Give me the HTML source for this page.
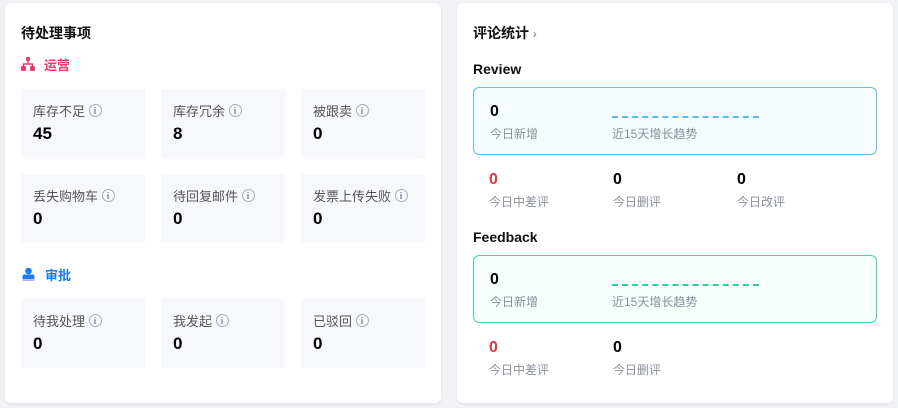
<!DOCTYPE html>
<html><head><meta charset="utf-8"><style>
*{margin:0;padding:0;box-sizing:border-box}
body{width:898px;height:408px;background:#f0f2f5;font-family:"Liberation Sans","Noto Sans CJK SC",sans-serif;position:relative;overflow:hidden}
.card{position:absolute;top:3px;width:436px;height:400px;background:#fff;border-radius:6px;box-shadow:0 1px 3px rgba(0,0,0,.08)}
.abs{position:absolute;white-space:nowrap}
.title{font-size:14px;font-weight:bold;color:#111}
.tile{position:absolute;width:124px;height:69px;background:#f7f8fb}
.tile .l{position:absolute;left:12px;top:12px;font-size:13px;color:#555;display:flex;align-items:center}
.tile .n{position:absolute;left:12px;top:35px;font-size:17px;font-weight:bold;color:#000}
.i{display:inline-block;width:13px;height:13px;border:1.3px solid #a5abba;border-radius:50%;margin-left:4px;position:relative}
.i:before{content:"";position:absolute;left:4.2px;top:1.6px;width:1.6px;height:1.6px;background:#a5abba}
.i:after{content:"";position:absolute;left:4.2px;top:4.2px;width:1.6px;height:4.5px;background:#a5abba}
.box{position:absolute;left:16px;width:404px;height:68px;border-radius:6px;border:1px solid}
.big{font-size:16px;font-weight:bold;color:#000}
.sub{font-size:12px;color:#8a8f99}
</style></head><body>
<div class="card" style="left:5px">
 <div class="abs title" style="left:16px;top:20px">待处理事项</div>
 <svg class="abs" style="left:16px;top:54px" width="14" height="14" viewBox="0 0 14 14"><rect x="5" y="0" width="4" height="4" rx="1" fill="#f0386b"/><path d="M7 4v3M2.5 9V7h9v2" stroke="#f0386b" stroke-width="1.4" fill="none"/><rect x="0" y="9" width="5" height="5" rx="1" fill="#f0386b"/><rect x="9" y="9" width="5" height="5" rx="1" fill="#f0386b"/></svg>
 <div class="abs" style="left:39px;top:52px;font-size:13px;color:#f0386b;font-weight:bold">运营</div>
 <div class="tile" style="left:16px;top:86px"><div class="l">库存不足<span class="i"></span></div><div class="n">45</div></div>
 <div class="tile" style="left:156px;top:86px"><div class="l">库存冗余<span class="i"></span></div><div class="n">8</div></div>
 <div class="tile" style="left:296px;top:86px"><div class="l">被跟卖<span class="i"></span></div><div class="n">0</div></div>
 <div class="tile" style="left:16px;top:171px"><div class="l">丢失购物车<span class="i"></span></div><div class="n">0</div></div>
 <div class="tile" style="left:156px;top:171px"><div class="l">待回复邮件<span class="i"></span></div><div class="n">0</div></div>
 <div class="tile" style="left:296px;top:171px"><div class="l">发票上传失败<span class="i"></span></div><div class="n">0</div></div>
 <svg class="abs" style="left:17px;top:264px" width="13" height="14" viewBox="0 0 13 14"><circle cx="6.5" cy="4" r="3.3" fill="#1a7cf0"/><path d="M0.5 12v-2.5q0-2 2-2h8q2 0 2 2V12z" fill="#1a7cf0"/><rect x="0.5" y="12.5" width="12" height="1.2" fill="#a37be8"/></svg>
 <div class="abs" style="left:40px;top:262px;font-size:13px;color:#1a7cf0;font-weight:bold">审批</div>
 <div class="tile" style="left:16px;top:296px"><div class="l">待我处理<span class="i"></span></div><div class="n">0</div></div>
 <div class="tile" style="left:156px;top:296px"><div class="l">我发起<span class="i"></span></div><div class="n">0</div></div>
 <div class="tile" style="left:296px;top:296px"><div class="l">已驳回<span class="i"></span></div><div class="n">0</div></div>
</div>
<div class="card" style="left:457px">
 <div class="abs title" style="left:16px;top:20px">评论统计 <span style="color:#999;font-weight:bold;font-size:12px">›</span></div>
 <div class="abs title" style="left:16px;top:58px;font-size:14px">Review</div>
 <div class="box" style="top:84px;border-color:#5cc0f5;background:#f6fbff">
  <div class="abs big" style="left:16px;top:15px">0</div>
  <div class="abs sub" style="left:16px;top:37px">今日新增</div>
  <div class="abs" style="left:138px;top:28px;width:147px;border-top:2px dashed #55bdf3"></div>
  <div class="abs sub" style="left:138px;top:37px">近15天增长趋势</div>
 </div>
 <div class="abs big" style="left:32px;top:168px;color:#e8333f">0</div><div class="abs sub" style="left:32px;top:190px">今日中差评</div>
 <div class="abs big" style="left:156px;top:168px">0</div><div class="abs sub" style="left:156px;top:190px">今日删评</div>
 <div class="abs big" style="left:280px;top:168px">0</div><div class="abs sub" style="left:280px;top:190px">今日改评</div>
 <div class="abs title" style="left:16px;top:226px">Feedback</div>
 <div class="box" style="top:252px;border-color:#3fd6a9;background:#f5fffb">
  <div class="abs big" style="left:16px;top:15px">0</div>
  <div class="abs sub" style="left:16px;top:37px">今日新增</div>
  <div class="abs" style="left:138px;top:28px;width:147px;border-top:2px dashed #2fcf9c"></div>
  <div class="abs sub" style="left:138px;top:37px">近15天增长趋势</div>
 </div>
 <div class="abs big" style="left:32px;top:336px;color:#e8333f">0</div><div class="abs sub" style="left:32px;top:358px">今日中差评</div>
 <div class="abs big" style="left:156px;top:336px">0</div><div class="abs sub" style="left:156px;top:358px">今日删评</div>
</div>
</body></html>
